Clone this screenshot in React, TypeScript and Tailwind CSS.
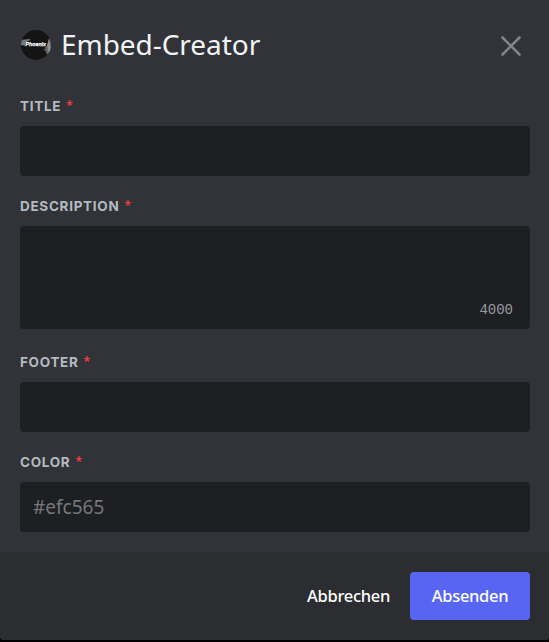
import React from "react";

function Label({ text }: { text: string }) {
  return (
    <label className="flex h-4 items-center font-['Inter',sans-serif] text-[13.5px] leading-4 font-bold text-[#b5bac1]">
      <span className="tracking-[0.7px]">{text}</span>
      <span className="ml-[5px] font-['Noto_Sans',sans-serif] text-[12px] font-semibold text-[#f23f42]">*</span>
    </label>
  );
}

function Avatar() {
  return (
    <svg className="ml-px h-[30px] w-[30px] shrink-0" viewBox="0 0 30 30">
      <defs>
        <clipPath id="disc">
          <circle cx="15" cy="15" r="15" />
        </clipPath>
      </defs>
      <g clipPath="url(#disc)">
        <rect width="30" height="30" fill="#141415" />
        <path d="M0 10l8-1 2 1-3 1-2 2-1 3-3-1-2 1z" fill="#777779" />
        <path d="M30 7l-3 3v4l-2 3-2 1 2 1-3 1 3 1v2l3 3 2-2z" fill="#68686a" />
        <path d="M28 10l-2 5 1 4 1 4 2-3z" fill="#929294" />
        <text x="4.5" y="16.2" textLength="20.5" lengthAdjust="spacingAndGlyphs" fill="#ffffff" stroke="#ffffff" strokeWidth="0.25" fontSize="6" fontWeight="900" fontStyle="italic" fontFamily="Liberation Sans, sans-serif">
          Phoenix
        </text>
      </g>
    </svg>
  );
}

export default function App() {
  return (
    <div className="h-[642px] w-[549px] bg-black font-['Noto_Sans',sans-serif]">
      <div className="flex h-[640px] flex-col overflow-hidden rounded-b-[4px] bg-[#313338]">
        <main className="flex flex-1 flex-col px-5 pr-[19px]">
          <header className="flex h-[90px] items-center">
            <Avatar />
            <h1 className="mb-[2px] ml-[10px] text-[28px] leading-9 font-normal tracking-[-0.05px] text-[#f2f3f5]">Embed-Creator</h1>
            <button className="mt-[2px] mr-[9px] ml-auto">
              <svg className="h-5 w-5" viewBox="0 0 20 20" fill="none" stroke="#80848e" strokeWidth="2.6" strokeLinecap="round">
                <path d="M1.5 1.5l17 17M18.5 1.5l-17 17" />
              </svg>
            </button>
          </header>
          <section className="mt-2">
            <Label text="TITLE" />
            <div className="mt-3 h-[50px] rounded-[4px] bg-[#1e1f22]" />
          </section>
          <section className="mt-[22px]">
            <Label text="DESCRIPTION" />
            <div className="mt-3 flex h-[103px] items-end justify-end rounded-[4px] bg-[#1e1f22] pr-[17px] pb-[10px] font-['Liberation_Mono',monospace] text-[14px] leading-[18px] text-[#949ba4]">
              4000
            </div>
          </section>
          <section className="mt-[25px]">
            <Label text="FOOTER" />
            <div className="mt-3 h-[50px] rounded-[4px] bg-[#1e1f22]" />
          </section>
          <section className="mt-[22px]">
            <Label text="COLOR" />
            <div className="mt-3 flex h-[50px] items-center rounded-[4px] bg-[#1e1f22] pt-px pl-[13px] text-[19px] font-normal text-[#75777b]">
              #efc565
            </div>
          </section>
        </main>
        <footer className="flex h-[88px] items-center justify-end bg-[#2b2d31] pr-[19px]">
          <button className="mr-5 text-[16.5px] font-medium tracking-[-0.3px] text-white">Abbrechen</button>
          <button className="h-12 w-[120px] rounded-[4px] bg-[#5865f2] text-[16.5px] font-medium tracking-[-0.3px] text-white">Absenden</button>
        </footer>
      </div>
    </div>
  );
}
